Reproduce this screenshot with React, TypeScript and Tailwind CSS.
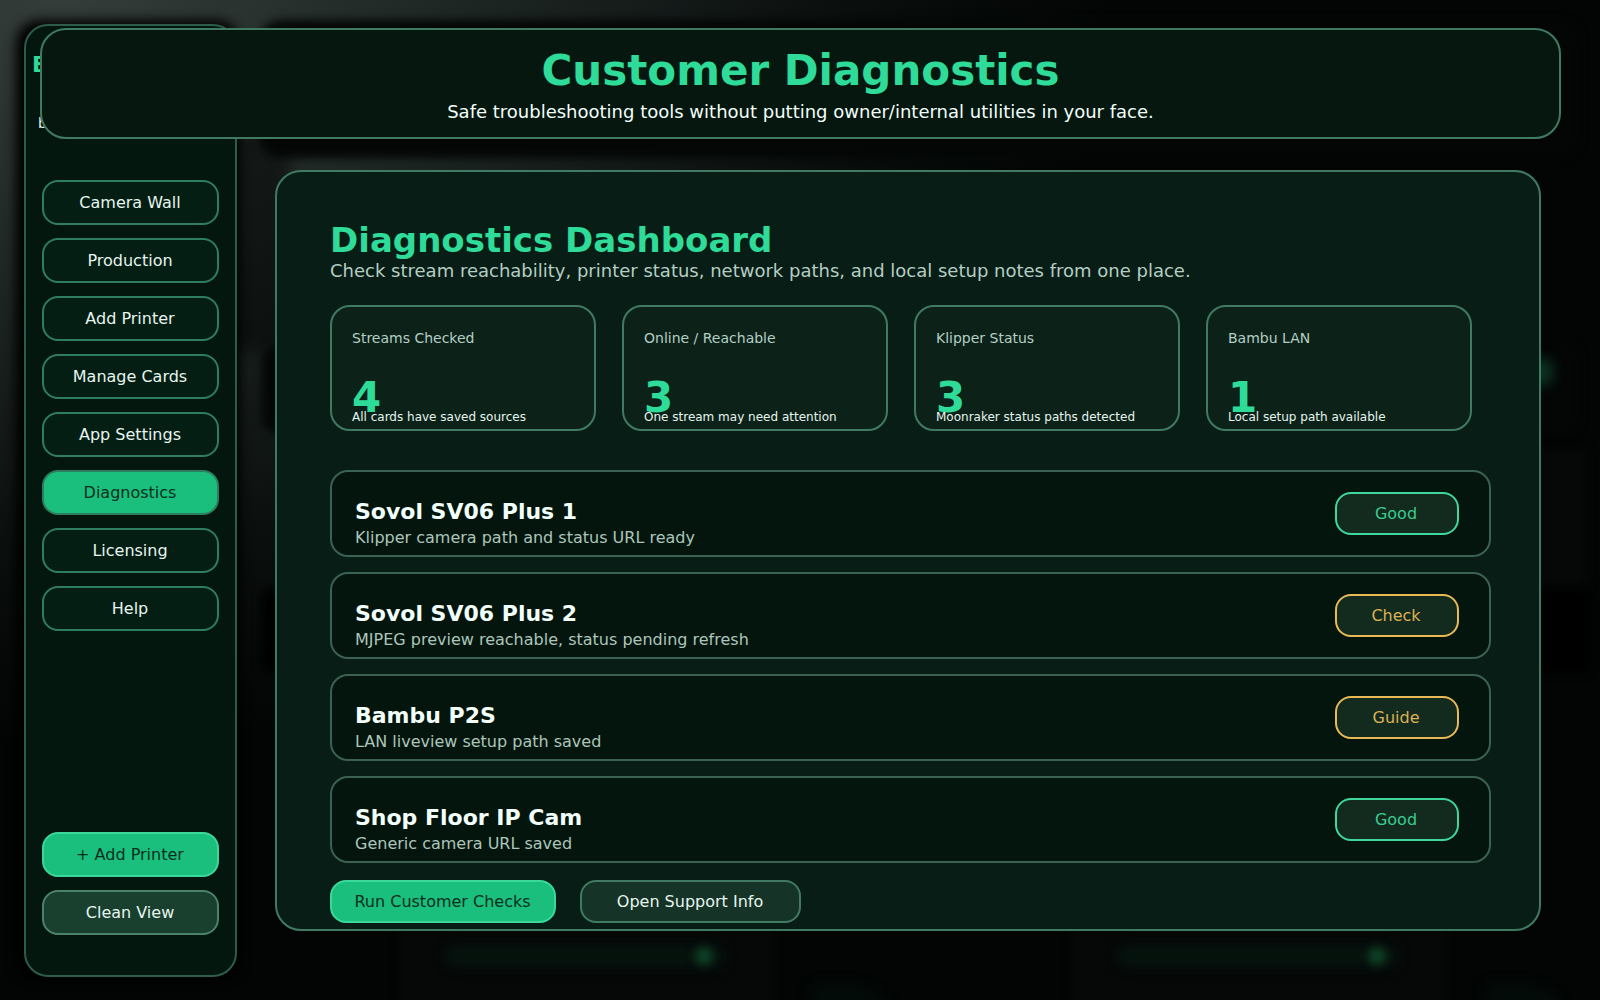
import { clsx } from 'clsx'

const navItems = [
  'Camera Wall',
  'Production',
  'Add Printer',
  'Manage Cards',
  'App Settings',
  'Diagnostics',
  'Licensing',
  'Help',
]

const stats = [
  { label: 'Streams Checked', value: 4, note: 'All cards have saved sources' },
  { label: 'Online / Reachable', value: 3, note: 'One stream may need attention' },
  { label: 'Klipper Status', value: 3, note: 'Moonraker status paths detected' },
  { label: 'Bambu LAN', value: 1, note: 'Local setup path available' },
]

const devices = [
  { name: 'Sovol SV06 Plus 1', detail: 'Klipper camera path and status URL ready', status: 'Good' },
  { name: 'Sovol SV06 Plus 2', detail: 'MJPEG preview reachable, status pending refresh', status: 'Check' },
  { name: 'Bambu P2S', detail: 'LAN liveview setup path saved', status: 'Guide' },
  { name: 'Shop Floor IP Cam', detail: 'Generic camera URL saved', status: 'Good' },
]

function Backdrop() {
  return (
    <div aria-hidden="true" className="absolute inset-0 overflow-hidden bg-[#020504]">
      <div className="absolute inset-0 bg-[radial-gradient(ellipse_1050px_740px_at_60px_0px,#343d3a_0%,#1c2422_42%,#090d0c_78%,transparent_100%)]" />
      <div className="absolute top-[130px] left-[230px] h-[220px] w-[60px] bg-black/45 blur-[8px]" />
      <div className="absolute top-5 bottom-5 left-4 w-[224px] rounded-3xl bg-black blur-[6px]" />
      <div className="absolute top-5 right-5 left-[258px] h-[138px] rounded-3xl bg-[#030605] blur-[5px]" />
      <div className="absolute top-[345px] right-5 left-[262px] h-[88px] rounded-2xl bg-[#030605] blur-[5px]" />
      <div className="absolute top-[450px] right-3 h-[140px] w-[80px] bg-[#050807] blur-[5px]" />
      <div className="absolute top-[590px] right-3 left-[262px] h-[82px] bg-black blur-[5px]" />
      <div className="absolute top-[358px] right-[46px] size-7 rounded-full bg-[#0c3022] blur-[6px]" />
      <div className="absolute top-[910px] left-[400px] h-[100px] w-[375px] bg-[#050807] blur-[4px]" />
      <div className="absolute top-[946px] left-[445px] h-5 w-[280px] rounded-full bg-[#06140e] blur-[6px]" />
      <div className="absolute top-[947px] left-[695px] size-[18px] rounded-full bg-[#0f4428] blur-[5px]" />
      <div className="absolute top-[910px] left-[1072px] h-[100px] w-[375px] bg-[#050807] blur-[4px]" />
      <div className="absolute top-[946px] left-[1118px] h-5 w-[280px] rounded-full bg-[#06140e] blur-[6px]" />
      <div className="absolute top-[947px] left-[1368px] size-[18px] rounded-full bg-[#0f4428] blur-[5px]" />
      <div className="absolute top-[984px] left-[812px] h-10 w-[80px] rounded-tr-full bg-[#030b08] blur-[6px]" />
      <div className="absolute top-[984px] left-[1486px] h-10 w-[80px] rounded-tr-full bg-[#030b08] blur-[6px]" />
    </div>
  )
}

function Sidebar() {
  return (
    <aside className="relative flex w-[213px] shrink-0 flex-col rounded-3xl border-2 border-[#2e5c4a] bg-[#03170e] px-4 pb-10">
      <div className="h-[154px] shrink-0 pt-[25px] whitespace-nowrap">
        <p className="-ml-2.5 text-[22px]/[28px] font-bold text-[#2edb98]">B</p>
        <p className="-ml-1 pt-8 text-[14px]/[24px] text-[#e6f5ee]">b</p>
      </div>
      <nav className="flex flex-col gap-[13px]">
        {navItems.map((item) => (
          <button
            key={item}
            type="button"
            className={clsx(
              'h-[45px] rounded-2xl border-2 border-[#2e7d5e] pr-px',
              item === 'Diagnostics' ? 'bg-[#1bbf7d] text-[#062e1c]' : 'bg-[#051e14] text-[#e6f5ee]'
            )}
          >
            {item}
          </button>
        ))}
      </nav>
      <div className="mt-auto flex flex-col gap-[13px]">
        <button type="button" className="h-[45px] rounded-2xl border-2 border-[#3ad99b] bg-[#1bbf7d] pr-px text-[#062e1c]">
          + Add Printer
        </button>
        <button type="button" className="h-[45px] rounded-2xl border-2 border-[#4b826b] bg-[#193f2f] pr-px text-[#e6f5ee]">
          Clean View
        </button>
      </div>
    </aside>
  )
}

export default function App() {
  return (
    <div className="relative flex min-h-screen pt-6 pb-[23px] pl-6 font-['DejaVu_Sans',sans-serif] text-[16px]/[20px]">
      <Backdrop />
      <Sidebar />

      {/* Title bar floats over the top of the sidebar */}
      <header className="absolute top-7 right-[39px] left-10 z-10 flex h-[111px] flex-col items-center rounded-[26px] border-2 border-[#407a62] bg-[#05170f] pt-[17px] text-center">
        <h1 className="text-[42px]/[48px] font-bold text-[#2edb98]">Customer Diagnostics</h1>
        <p className="pt-[5px] text-[18px]/[24px] text-[#f3fffa]">
          Safe troubleshooting tools without putting owner/internal utilities in your face.
        </p>
      </header>

      <main className="relative mt-[146px] mr-[59px] ml-[38px] flex-1 self-start rounded-[26px] border-2 border-[#407a62] bg-[#081d15] pt-12 pr-12 pb-[6px] pl-[53px]">
        <h2 className="text-[34px]/[40px] font-bold text-[#2edb98]">Diagnostics Dashboard</h2>
        <p className="text-[18px]/[22px] text-[#b4cec4]">
          Check stream reachability, printer status, network paths, and local setup notes from one place.
        </p>

        <section className="mt-[23px] mr-[19px] grid grid-cols-4 gap-[26px]">
          {stats.map((stat) => (
            <div
              key={stat.label}
              className="h-[126px] rounded-[20px] border-2 border-[#407a62] bg-[#0c2219] px-5 pt-[21px]"
            >
              <p className="text-[14px]/[20px] text-[#b4cec4]">{stat.label}</p>
              <p className="pt-[26px] text-[42px]/[48px] font-bold text-[#2edb98]">{stat.value}</p>
              <p className="relative -mt-[13px] text-[12px]/[16px] text-[#e6f5ee]">{stat.note}</p>
            </div>
          ))}
        </section>

        <section className="mt-[39px] flex flex-col gap-[15px]">
          {devices.map((device) => (
            <div
              key={device.name}
              className="flex h-[87px] items-center justify-between rounded-[18px] border-2 border-[#3a6152] bg-[#04150e] pr-[30px] pl-[23px]"
            >
              <div className="pt-5">
                <h3 className="text-[22px]/[28px] font-bold text-[#f3fffa]">{device.name}</h3>
                <p className="text-[16px]/[24px] text-[#acc6bb]">{device.detail}</p>
              </div>
              <span
                className={clsx(
                  'flex h-[43px] w-[124px] items-center justify-center rounded-2xl border-2 bg-[#122b1e] pr-0.5',
                  device.status === 'Good' ? 'border-[#3fd79c] text-[#3acb91]' : 'border-[#e8b955] text-[#dcb054]'
                )}
              >
                {device.status}
              </span>
            </div>
          ))}
        </section>

        <div className="mt-[17px] flex gap-6">
          <button type="button" className="h-[43px] w-[226px] rounded-2xl border-2 border-[#3ad99b] bg-[#1bbf7d] pr-px text-[#062e1c]">
            Run Customer Checks
          </button>
          <button type="button" className="h-[43px] w-[221px] rounded-2xl border-2 border-[#407a62] bg-[#153326] pr-px text-[#e6f5ee]">
            Open Support Info
          </button>
        </div>
      </main>
    </div>
  )
}
